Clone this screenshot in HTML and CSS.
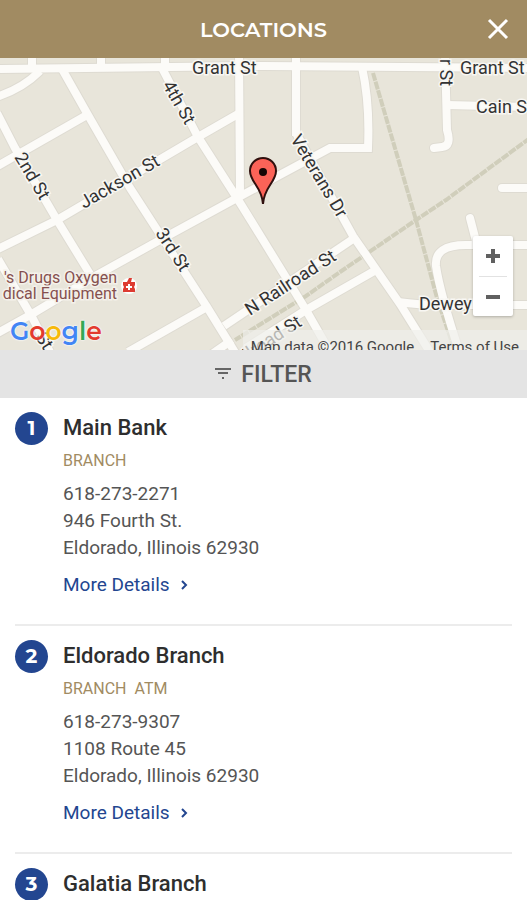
FILE: index.html
```
<!DOCTYPE html>
<html lang="en">
<head>
    <meta charset="UTF-8">
    <meta name="viewport" content="width=device-width, initial-scale=1.0">
    <title>Locations</title>
    <link rel="stylesheet" href="styles.css">
</head>
<body>
    <header class="header">
        <h1>LOCATIONS</h1>
        <button class="close-btn" type="button" aria-label="Close">
            <svg width="22" height="22" viewBox="0 0 22 22"><path d="M2 2 20 20M20 2 2 20"/></svg>
        </button>
    </header>

    <div class="map">
        <svg class="map-canvas" viewBox="0 0 527 292" preserveAspectRatio="xMidYMid slice">
            <defs>
                <g id="roads">
                    <path d="M0 11 263 8 527 10"/>
                    <path d="M32 -5V11M101 -5V11M165 -5V11M239 -5 240 137M296 -5V78"/>
                    <path d="M-4 39Q22 31 40 13"/>
                    <path d="M62 11 88 57 130 130 207 249 236 296"/>
                    <path d="M-3 55 15 90 57 162 90 216"/>
                    <path d="M-2 201 32 259 50 294"/>
                    <path d="M162 10 198 79 237 140 263 182 306 252 330 294"/>
                    <path d="M-4 109 87 57"/>
                    <path d="M-4 192 57 162 198 79 238 56"/>
                    <path d="M-4 276 32 256 97 217 160 182 237 140 276 119 330 90H368Q370 45 362 9"/>
                    <path d="M128 294 207 249"/>
                    <path d="M224 268 353 181"/>
                    <path d="M212 296 232 282"/>
                    <path d="M246 290 306 252 376 212"/>
                    <path d="M296 75 353 178 400 246 430 294"/>
                    <path d="M398 244Q420 247 440 247L530 247"/>
                    <path d="M530 187H466Q434 187 436 208Q440 235 460 296"/>
                    <path d="M470 160 477 187" stroke-linecap="round"/>
                    <path d="M502 130H530" stroke-linecap="round"/>
                    <path d="M445 -5 447 72Q452 88 442 89L434 90" stroke-linecap="round"/>
                    <path d="M447 47 530 49"/>
                </g>
            </defs>
            <rect width="527" height="292" fill="#e8e5da"/>
            <g class="roads-casing"><use href="#roads"/></g>
            <g class="rails">
                <path d="M373 15 416 162 437 240 455 294"/>
                <path d="M530 80 446 142 416 162 340 214 306 238 235 282"/>
            </g>
            <g class="roads-fill"><use href="#roads"/></g>
            <g class="map-labels">
                <text x="192" y="16">Grant St</text>
                <text x="460" y="16">Grant St</text>
                <text x="476" y="55">Cain St</text>
                <text x="419" y="252">Dewey</text>
                <text transform="translate(162 27) rotate(60)">4th St</text>
                <text transform="translate(14 99) rotate(59)">2nd St</text>
                <text transform="translate(155 175) rotate(57)">3rd St</text>
                <text transform="translate(84 151) rotate(-30)">Jackson St</text>
                <text transform="translate(290 81) rotate(59)">Veterans Dr</text>
                <text transform="translate(250 258) rotate(-33)">N Railroad St</text>
                <text transform="translate(303 267) rotate(-33)" text-anchor="end">N Railroad St</text>
                <text transform="translate(440 1) rotate(90)">r St</text>
                <text transform="translate(35 279) rotate(57)">St</text>
            </g>
            <g class="map-place">
                <text x="117" y="225" text-anchor="end">'s Drugs Oxygen</text>
                <text x="117" y="241" text-anchor="end">dical Equipment</text>
                <circle cx="129" cy="228" r="8" fill="#fff"/>
                <path d="M123 224H127L129 220L132 220L131 224H135V227L134 229L135 231V234H123V231L124 229L123 227Z" fill="#dd3b31"/>
                <path d="M129 226V232M126 229H132" stroke="#fff" stroke-width="2"/>
            </g>
            <path d="M263 146C262 129 250 124 250 113A13 13 0 0 1 276 113C276 124 264 129 263 146Z" fill="#fb6358" stroke="#30100e" stroke-width="2"/>
            <circle cx="263" cy="114" r="4" fill="#170605"/>
        </svg>
        <a class="google" href="#" aria-label="Google"><span class="blue">G</span><span class="red">o</span><span class="yellow">o</span><span class="blue">g</span><span class="green">l</span><span class="red">e</span></a>
        <div class="zoom">
            <button type="button" aria-label="Zoom in"><svg width="16" height="16" viewBox="0 0 16 16"><path d="M8 1V15M1 8H15"/></svg></button>
            <button type="button" aria-label="Zoom out"><svg width="16" height="16" viewBox="0 0 16 16"><path d="M1 8H15"/></svg></button>
        </div>
        <div class="credits">
            <span>Map data ©2016 Google</span>
            <a href="#">Terms of Use</a>
        </div>
    </div>

    <button class="filter" type="button">
        <svg width="16" height="12" viewBox="0 0 16 12"><path d="M0 1H16M3 5H13M7 10H9"/></svg>
        FILTER
    </button>

    <main class="locations">
        <article class="location">
            <span class="number">1</span>
            <div>
                <h2>Main Bank</h2>
                <p class="tags"><span>BRANCH</span></p>
                <p class="address">618-273-2271<br>946 Fourth St.<br>Eldorado, Illinois 62930</p>
                <a class="more" href="#">More Details <svg width="7" height="10" viewBox="0 0 7 10"><path d="M1 1 5 5 1 9"/></svg></a>
            </div>
        </article>
        <article class="location">
            <span class="number">2</span>
            <div>
                <h2>Eldorado Branch</h2>
                <p class="tags"><span>BRANCH</span><span>ATM</span></p>
                <p class="address">618-273-9307<br>1108 Route 45<br>Eldorado, Illinois 62930</p>
                <a class="more" href="#">More Details <svg width="7" height="10" viewBox="0 0 7 10"><path d="M1 1 5 5 1 9"/></svg></a>
            </div>
        </article>
        <article class="location">
            <span class="number">3</span>
            <div>
                <h2>Galatia Branch</h2>
            </div>
        </article>
    </main>
</body>
</html>
```
FILE: styles.css
```
* {
    box-sizing: border-box;
}

body {
    margin: 0;
    height: 100vh;
    display: flex;
    flex-direction: column;
    overflow: hidden;
    background: #fff;
    color: #2e2e2e;
    font-family: Roboto, sans-serif;
}

button {
    border: none;
    padding: 0;
    cursor: pointer;
    font-family: inherit;
}

a {
    text-decoration: none;
}

svg {
    fill: none;
}

.header {
    flex: none;
    display: grid;
    grid-template-columns: 1fr auto 1fr;
    align-items: center;
    height: 58px;
    padding: 0 18px;
    background: #a18b62;
    color: #fff;
}

.header h1 {
    grid-column: 2;
    margin: 0;
    font-family: Montserrat, Lato, sans-serif;
    font-size: 21px;
    font-weight: 600;
}

.close-btn {
    justify-self: end;
    display: flex;
    background: none;
}

.close-btn svg {
    stroke: #fff;
    stroke-width: 3;
}

/* Map */
.map {
    flex: none;
    position: relative;
    height: 292px;
    overflow: hidden;
}

.map-canvas {
    display: block;
    width: 100%;
    height: 100%;
}

.roads-casing {
    stroke: #dedbd2;
    stroke-width: 10;
}

.roads-fill {
    stroke: #fcfbf8;
    stroke-width: 8;
}

.rails {
    stroke: #d0cebb;
    stroke-width: 4;
    stroke-dasharray: 8 1;
}

.map-labels {
    fill: #333;
    stroke: #f8f7f3;
    stroke-width: 3;
    paint-order: stroke;
    font-size: 18px;
}

.map-place text {
    fill: #85504f;
    stroke: #f4f1ea;
    stroke-width: 3;
    paint-order: stroke;
    font-size: 16px;
}

.google {
    position: absolute;
    left: 10px;
    bottom: 0;
    font-family: Montserrat, Lato, sans-serif;
    font-size: 25px;
    font-weight: 600;
    line-height: 38px;
    text-shadow: 0 0 2px #fff, 0 0 2px #fff;
}

.blue { color: #4285f4; }
.red { color: #e33b2e; }
.yellow { color: #f7b90a; }
.green { color: #34a853; }

.zoom {
    position: absolute;
    right: 14px;
    bottom: 34px;
    width: 40px;
    padding: 0 6px;
    border-radius: 2px;
    background: #fff;
    box-shadow: 0 1px 3px rgba(0, 0, 0, 0.25);
}

.zoom button {
    display: flex;
    align-items: center;
    justify-content: center;
    width: 100%;
    height: 40px;
    background: none;
}

.zoom button + button {
    border-top: 1px solid #e2e2e2;
}

.zoom svg {
    stroke: #606060;
    stroke-width: 4;
}

.credits {
    position: absolute;
    right: 0;
    bottom: -8px;
    display: flex;
    gap: 16px;
    padding: 6px 8px 0;
    background: rgba(240, 239, 235, 0.7);
    color: #444;
    font-size: 15px;
    line-height: 22px;
}

.credits a {
    color: #444;
}

.filter {
    flex: none;
    display: flex;
    align-items: center;
    justify-content: center;
    gap: 10px;
    height: 48px;
    background: #e4e4e4;
    color: #555;
    font-size: 23px;
    font-weight: 500;
}

.filter svg {
    stroke: #666;
    stroke-width: 2;
}

/* Branch list */
.locations {
    flex: 1;
    min-height: 0;
    padding: 0 15px;
    overflow: hidden;
}

.location {
    display: flex;
    gap: 15px;
    padding: 14px 0 26px;
    border-bottom: 2px solid #ececec;
}

.number {
    flex: none;
    width: 33px;
    height: 33px;
    border-radius: 50%;
    background: #234690;
    color: #fff;
    font-family: Montserrat, Lato, sans-serif;
    font-size: 20px;
    font-weight: 700;
    line-height: 33px;
    text-align: center;
}

.location h2 {
    margin: 0;
    font-size: 22px;
    font-weight: 500;
    line-height: 32px;
}

.tags {
    display: flex;
    gap: 8px;
    margin: 4px 0 6px;
    color: #a18b62;
    font-size: 16px;
    line-height: 26px;
}

.address {
    margin: 0 0 10px;
    color: #555;
    font-size: 19px;
    line-height: 27px;
}

.more {
    display: flex;
    align-items: center;
    gap: 11px;
    color: #234690;
    font-size: 19px;
    line-height: 27px;
}

.more svg {
    stroke: #234690;
    stroke-width: 2;
}
```
